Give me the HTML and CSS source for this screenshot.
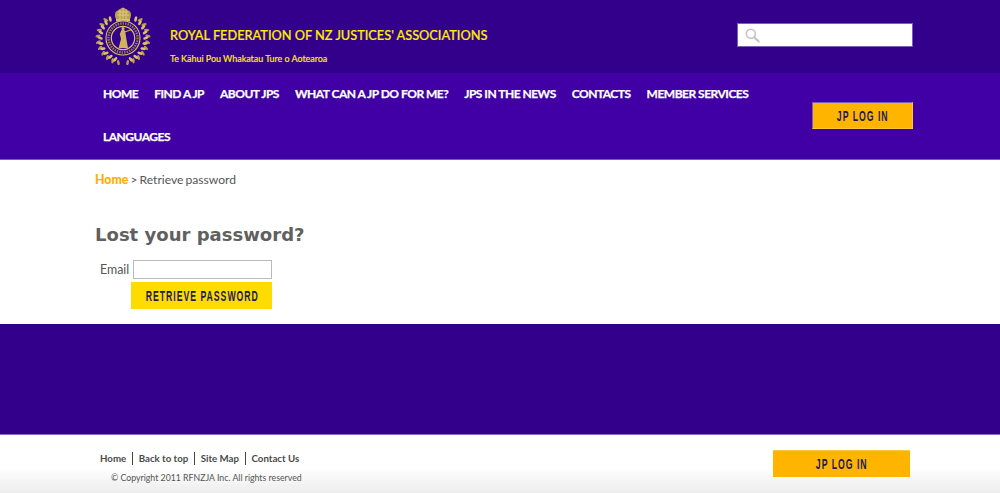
FILE: index.html
```html
<!DOCTYPE html>
<html lang="en">
<head>
<meta charset="utf-8">
<title>Retrieve password</title>
<link rel="stylesheet" href="styles.css">
</head>
<body>
<header class="top">
  <div class="brand">
    <svg class="crest" viewBox="0 0 56 60" width="56" height="60" aria-hidden="true">
      <defs>
        <g id="leaf">
          <ellipse cx="24.8" cy="10.4" rx="1.4" ry="2.8" transform="rotate(-28 24.8 10.4)" fill="#dcc26a"/>
          <ellipse cx="28.6" cy="8" rx="1.3" ry="2.7" transform="rotate(22 28.6 8)" fill="#b79c4a"/>
        </g>
      </defs>
      <path d="M21 14 C19 10 20 6 23 5.5 C24.5 3.5 26.5 3.5 28 2.5 C29.5 3.5 31.5 3.5 33 5.5 C36 6 37 10 35 14 Z" fill="#b9a057"/>
      <path d="M23 7 L33 7 M22 10 L34 10 M25 5 L25 14 M28 3 L28 14 M31 5 L31 14" stroke="#e6d084" stroke-width="0.8"/>
      <rect x="21" y="14" width="14" height="2.4" fill="#d9bf68"/>
      <g>
        <use href="#leaf" transform="rotate(42 28 33)"/>
        <use href="#leaf" transform="rotate(56 28 33)"/>
        <use href="#leaf" transform="rotate(70 28 33)"/>
        <use href="#leaf" transform="rotate(84 28 33)"/>
        <use href="#leaf" transform="rotate(98 28 33)"/>
        <use href="#leaf" transform="rotate(112 28 33)"/>
        <use href="#leaf" transform="rotate(126 28 33)"/>
        <use href="#leaf" transform="rotate(140 28 33)"/>
        <use href="#leaf" transform="rotate(154 28 33)"/>
        <use href="#leaf" transform="rotate(168 28 33)"/>
      </g>
      <g transform="matrix(-1 0 0 1 56 0)">
        <use href="#leaf" transform="rotate(42 28 33)"/>
        <use href="#leaf" transform="rotate(56 28 33)"/>
        <use href="#leaf" transform="rotate(70 28 33)"/>
        <use href="#leaf" transform="rotate(84 28 33)"/>
        <use href="#leaf" transform="rotate(98 28 33)"/>
        <use href="#leaf" transform="rotate(112 28 33)"/>
        <use href="#leaf" transform="rotate(126 28 33)"/>
        <use href="#leaf" transform="rotate(140 28 33)"/>
        <use href="#leaf" transform="rotate(154 28 33)"/>
        <use href="#leaf" transform="rotate(168 28 33)"/>
      </g>
      <circle cx="28" cy="33" r="17.3" fill="#33008c"/>
      <g fill="none">
        <circle cx="28" cy="33" r="17" stroke="#e0c464" stroke-width="1.1"/>
        <circle cx="28" cy="33" r="14.5" stroke="#8f7a45" stroke-width="2.4" stroke-dasharray="1.5 1"/>
        <circle cx="28" cy="33" r="11.7" stroke="#e0c464" stroke-width="1.2"/>
      </g>
      <path d="M26.5 25 L29 24 L30.4 27.5 L31.2 33 L33 43 L23.6 43 L26 34 L24.8 29 Z" fill="#cfb45c"/>
      <circle cx="28" cy="23.5" r="1.5" fill="#cfb45c"/>
      <path d="M29.5 27 L37 24.5" stroke="#cfb45c" stroke-width="1.1"/>
    </svg>
    <div class="brand-text">
      <div class="brand-name">ROYAL FEDERATION OF NZ JUSTICES' ASSOCIATIONS</div>
      <div class="brand-sub">Te Kāhui Pou Whakatau Ture o Aotearoa</div>
    </div>
  </div>
  <form class="search">
    <svg class="search-icon" viewBox="0 0 16 16" width="15" height="15" aria-hidden="true">
      <circle cx="6.2" cy="6.2" r="4.8" fill="none" stroke="#c4c4c4" stroke-width="1.7"/>
      <path d="M9.8 9.8 L14.6 14.4" stroke="#c4c4c4" stroke-width="2.2" stroke-linecap="round"/>
    </svg>
  </form>
</header>

<nav class="nav">
  <ul class="menu">
    <li><a href="#">HOME</a></li>
    <li><a href="#">FIND A JP</a></li>
    <li><a href="#">ABOUT JPS</a></li>
    <li><a href="#">WHAT CAN A JP DO FOR ME?</a></li>
    <li><a href="#">JPS IN THE NEWS</a></li>
    <li><a href="#">CONTACTS</a></li>
    <li><a href="#">MEMBER SERVICES</a></li>
    <li><a href="#">LANGUAGES</a></li>
  </ul>
  <a class="btn btn-nav" href="#"><span class="btn-text">JP LOG IN</span></a>
</nav>

<main class="main">
  <p class="crumbs"><a href="#">Home</a> &gt; Retrieve password</p>
  <h1 class="title">Lost your password?</h1>
  <form class="lost">
    <div class="field">
      <label class="field-label" for="email">Email</label>
      <input class="field-input" id="email" type="text">
    </div>
    <button class="btn btn-submit" type="button"><span class="btn-text">RETRIEVE PASSWORD</span></button>
  </form>
</main>

<div class="band"></div>

<footer class="foot">
  <div class="foot-left">
    <ul class="foot-links">
      <li><a href="#">Home</a></li>
      <li><a href="#">Back to top</a></li>
      <li><a href="#">Site Map</a></li>
      <li><a href="#">Contact Us</a></li>
    </ul>
    <p class="copy">© Copyright 2011 RFNZJA Inc. All rights reserved</p>
  </div>
  <a class="btn btn-foot" href="#"><span class="btn-text">JP LOG IN</span></a>
</footer>
</body>
</html>
```
FILE: styles.css
```css
* { box-sizing: border-box; }
html, body { margin: 0; padding: 0; }
body {
  width: 1000px;
  height: 493px;
  overflow: hidden;
  background: #fff;
  font-family: Lato, "Liberation Sans", sans-serif;
  color: #555;
}
a { text-decoration: none; color: inherit; }
ul { list-style: none; margin: 0; padding: 0; }

.top {
  height: 73px;
  background: #33008c;
  padding: 5px 87px 0 95px;
  display: flex;
  justify-content: space-between;
  align-items: flex-start;
}
.brand { display: flex; align-items: flex-start; gap: 19px; }
.crest { display: block; }
.brand-text { padding-top: 22px; }
.brand-name {
  color: #ffee00;
  font-size: 12.75px;
  font-weight: 500;
  line-height: 16px;
  white-space: nowrap;
  -webkit-text-stroke: 0.2px #ffee00;
}
.brand-sub {
  color: #ffee00;
  font-size: 8.9px;
  font-weight: 500;
  line-height: 12px;
  margin-top: 10px;
  white-space: nowrap;
  -webkit-text-stroke: 0.15px #ffee00;
}
.search {
  width: 176px;
  height: 24px;
  margin-top: 18px;
  background: #fff;
  border: 1px solid #7a5fb8;
  padding: 4px 0 0 7px;
}
.search-icon { display: block; }

.nav {
  height: 87px;
  background: #4000a6;
  border-bottom: 1px solid #7b55c9;
  padding: 0 87px 0 95px;
  display: flex;
  justify-content: space-between;
  align-items: flex-start;
}
.menu {
  width: 680px;
  margin-top: -3px;
  display: flex;
  flex-wrap: wrap;
}
.menu li { padding: 0 8px; height: 43px; line-height: 43px; }
.menu a {
  color: #fff;
  font-size: 12px;
  font-weight: 700;
  letter-spacing: -0.5px;
  white-space: nowrap;
  -webkit-text-stroke: 0.25px #fff;
}
.btn {
  display: flex;
  align-items: center;
  justify-content: center;
  font-family: "Liberation Sans", sans-serif;
  font-weight: 700;
  color: #1d1b4f;
  letter-spacing: 1.6px;
  font-size: 14px;
  background: #ffb400;
  border: 0;
  padding: 0;
  overflow: hidden;
}
.btn-text {
  display: block;
  white-space: nowrap;
  transform: scaleX(0.62);
}
.btn-nav {
  width: 101px;
  height: 27px;
  margin-top: 29px;
  padding-top: 1px;
  border: 1px solid #ffc533;
  border-top-color: #7a5fb8;
  border-left-color: #7a5fb8;
}

.main { height: 164px; padding: 0 87px 0 95px; }
.crumbs {
  margin: 0;
  padding-top: 12px;
  font-size: 12.1px;
  line-height: 16px;
  word-spacing: -1px;
  color: #555;
}
.crumbs a { color: #ffae00; font-weight: 900; font-size: 12.3px; }
.title {
  margin: 35px 0 0;
  font-family: "DejaVu Sans", Verdana, sans-serif;
  font-size: 18.05px;
  line-height: 24px;
  font-weight: 700;
  color: #606060;
}
.lost { margin-top: 13px; }
.field { display: flex; align-items: center; padding-left: 5px; gap: 4px; }
.field-label { font-size: 12.4px; color: #555; line-height: 19px; }
.field-input {
  width: 139px;
  height: 19px;
  background: #fff;
  border: 1px solid #bbb;
  padding: 0;
  margin: 0;
}
.btn-submit {
  width: 141px;
  height: 27px;
  margin: 3px 0 0 36px;
  padding-left: 2px;
  background: #ffdc00;
}

.band { height: 111px; background: #33008c; border-bottom: 1px solid #8a6cc8; }

.foot {
  height: 59px;
  padding: 9px 90px 0 100px;
  display: flex;
  justify-content: space-between;
  align-items: flex-start;
  background: linear-gradient(#fff 55%, #ececec);
}
.foot-links { display: flex; margin-top: 8px; }
.foot-links li {
  font-size: 9.7px;
  font-weight: 700;
  line-height: 13px;
  color: #4a4a4a;
  padding: 0 6px 0 5.5px;
  border-left: 1px solid #444;
}
.foot-links li:first-child { padding-left: 0; border-left: 0; }
.copy {
  margin: 7px 0 0 11px;
  font-size: 8.75px;
  line-height: 12px;
  color: #555;
}
.btn-foot {
  width: 137px;
  height: 27px;
  margin: 6px 0 0 0;
  border-top: 1px solid #ffc840;
}
```
